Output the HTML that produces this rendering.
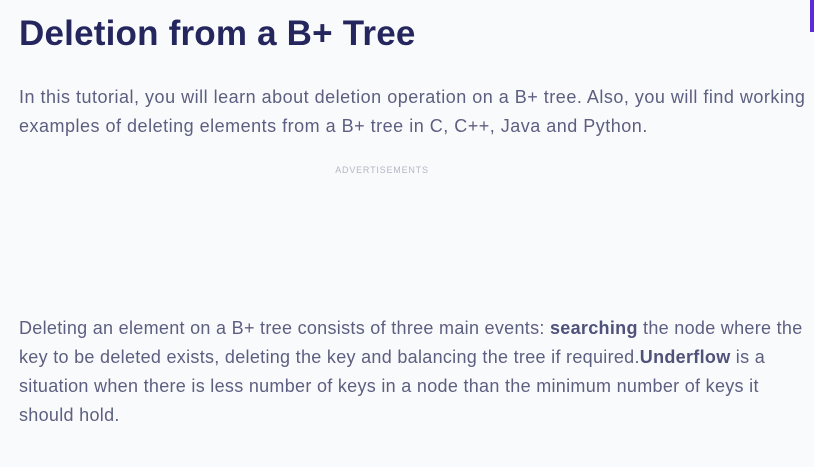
<!DOCTYPE html>
<html><head><style>
html,body{margin:0;padding:0;background:#f9fafc;width:814px;height:467px;overflow:hidden;position:relative;font-family:"Liberation Sans",sans-serif}
.bar{position:absolute;right:0;top:0;width:4px;height:32px;background:#5b2bd6}
h1{position:absolute;left:19px;top:12px;margin:0;font-size:35px;font-weight:bold;color:#25265e;letter-spacing:0.2px;line-height:44px}
.p{position:absolute;left:19px;margin:0;color:#5d5f80;font-size:18px;line-height:29px;white-space:nowrap;letter-spacing:0.3px}
.p b{color:#4f527a}
.ad{position:absolute;left:0;width:764px;text-align:center;top:165px;font-size:9px;letter-spacing:0.8px;color:#b4b6c4}
</style></head><body>
<div class="bar"></div>
<h1>Deletion from a B+ Tree</h1>
<div class="p" style="top:83px;letter-spacing:0.5px">In this tutorial, you will learn about deletion operation on a B+ tree. Also, you will find working<br>examples of deleting elements from a B+ tree in C, C++, Java and Python.</div>
<div class="ad">ADVERTISEMENTS</div>
<div class="p" style="top:314px">Deleting an element on a B+ tree consists of three main events: <b>searching</b> the node where the<br>key to be deleted exists, deleting the key and balancing the tree if required.<b>Underflow</b> is a<br>situation when there is less number of keys in a node than the minimum number of keys it<br>should hold.</div>
</body></html>
